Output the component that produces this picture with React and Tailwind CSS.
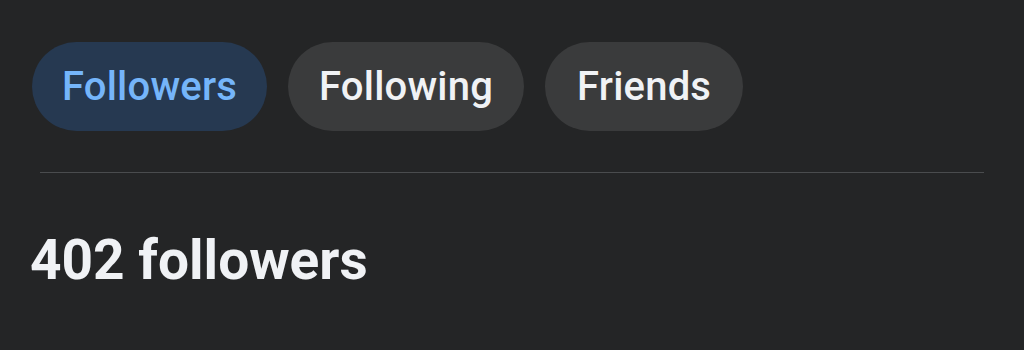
export default function App() {
  return (
    <div className="w-[1024px] h-[350px] bg-[#242526] overflow-hidden" style={{ fontFamily: "Roboto, 'Liberation Sans', sans-serif" }}>
      <div className="flex gap-[21px] pl-[32px] pt-[42px]">
        <div className="h-[89px] px-[30px] rounded-full bg-[#263951] text-[#75b5fa] text-[40px] tracking-[0.2px] font-medium flex items-center">Followers</div>
        <div className="h-[89px] px-[31px] rounded-full bg-[#3a3b3c] text-[#f0f2f5] text-[40px] tracking-[0.2px] font-medium flex items-center">Following</div>
        <div className="h-[89px] px-[32px] rounded-full bg-[#3a3b3c] text-[#f0f2f5] text-[40px] tracking-[0.2px] font-medium flex items-center">Friends</div>
      </div>
      <div className="mx-[40px] mt-[41px] h-[1px] bg-[#4a4c4e]"></div>
      <div className="pl-[30px] pt-[52px] text-[55px] leading-[70px] font-bold text-[#f0f2f5]">402 followers</div>
    </div>
  );
}
